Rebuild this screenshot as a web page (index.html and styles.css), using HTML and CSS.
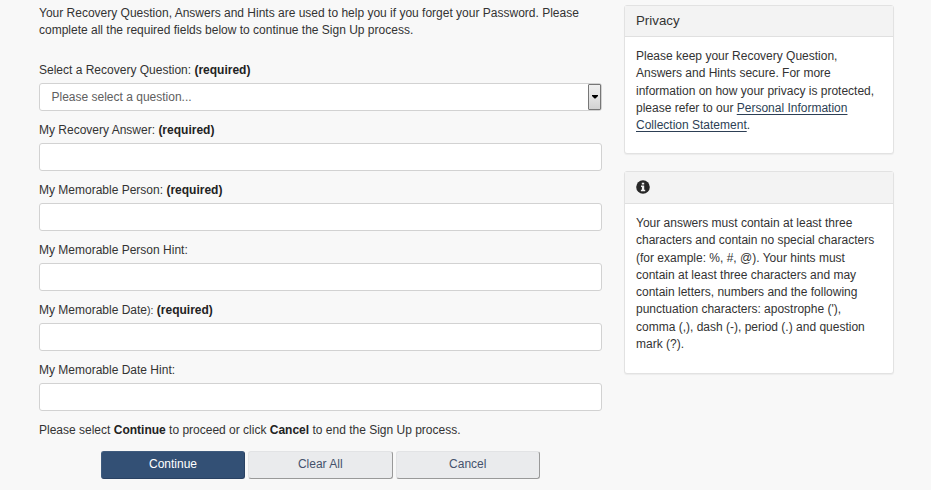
FILE: index.html
```html
<!DOCTYPE html>
<html lang="en">
<head>
<meta charset="utf-8">
<title>Recovery Question</title>
<link rel="stylesheet" href="styles.css">
</head>
<body>
<div class="page">
  <main class="form">
    <p class="intro">Your Recovery Question, Answers and Hints are used to help you if you forget your Password. Please<br>complete all the required fields below to continue the Sign Up process.</p>
    <div class="field"><label>Select a Recovery Question: <b>(required)</b></label>
      <div class="box select"><span>Please select a question...</span><i class="drop"><svg width="6" height="4" viewBox="0 0 6 4"><path d="M0 0h6v1L3.500 3.500h-1L0 1z"/></svg></i></div></div>
    <div class="field"><label>My Recovery Answer: <b>(required)</b></label><div class="box"></div></div>
    <div class="field"><label>My Memorable Person: <b>(required)</b></label><div class="box"></div></div>
    <div class="field"><label>My Memorable Person Hint:</label><div class="box"></div></div>
    <div class="field"><label>My Memorable Date<small>):</small> <b>(required)</b></label><div class="box"></div></div>
    <div class="field"><label>My Memorable Date Hint:</label><div class="box"></div></div>
    <p class="closing">Please select <b>Continue</b> to proceed or click <b>Cancel</b> to end the Sign Up process.</p>
    <div class="actions">
      <button class="primary">Continue</button><button>Clear All</button><button>Cancel</button>
    </div>
  </main>
  <aside class="side">
    <section class="panel privacy">
      <h2>Privacy</h2>
      <p>Please keep your Recovery Question,<br>Answers and Hints secure. For more<br>information on how your privacy is protected,<br>please refer to our <a href="#">Personal Information<br>Collection Statement</a>.</p>
    </section>
    <section class="panel info">
      <h2><svg width="14" height="14" viewBox="0 0 14 14"><circle cx="7" cy="7" r="6.800" fill="#282828"/><path d="M5.800 2.800h2.400v1.700H5.800zM5 5.500h3.200v4.200H9.200v1.500H4.900V9.700h1V7H5z" fill="#f3f3f3"/></svg></h2>
      <p>Your answers must contain at least three<br>characters and contain no special characters<br>(for example: %, #, @). Your hints must<br>contain at least three characters and may<br>contain letters, numbers and the following<br>punctuation characters: apostrophe ('),<br>comma (,), dash (-), period (.) and question<br>mark (?).</p>
    </section>
  </aside>
</div>
</body>
</html>
```
FILE: styles.css
```css
* { box-sizing: border-box; }
body { margin: 0; height: 490px; overflow: hidden; background: #f8f8f8; color: #333; font: 12px/17.280px "Liberation Sans", Arial, sans-serif; }
p, h2 { margin: 0; }
b { color: #222; }
.page { display: flex; gap: 22px; padding: 5px 37px 0 39px; }
.form { width: 563px; }
.intro { height: 56px; white-space: nowrap; }
.field { height: 60px; }
.field label { display: block; height: 22px; line-height: 18px; }
.field small { font-size: 10.500px; }
.box { height: 28px; border: 1px solid #d2d2d2; border-radius: 3px; background: #fff; }
.select { display: flex; justify-content: space-between; padding-left: 11.500px; line-height: 26px; color: #606060; }
.drop { display: flex; align-items: center; justify-content: center; width: 13px; border: 1px solid #777; border-radius: 1px; background: linear-gradient(#f0f0f0, #e4e4e4 50%, #d2d2d2); }
.closing { height: 30px; line-height: 18px; }
.actions { display: flex; gap: 3px; padding-left: 62px; }
button { width: 144.500px; height: 28px; padding: 0; border: 1px solid #e2e3e5; border-right: 1px solid #999; border-bottom: 1px solid #999; border-radius: 3px; background: #eaebed; color: #45526c; font: inherit; }
.primary { width: 144px; background: #335075; border-color: #3f5b7e #294162 #294162 #3f5b7e; color: #fff; }
.side { width: 270px; }
.panel { border: 1px solid #e2e2e2; border-radius: 3px; background: #fff; box-shadow: 0 1px 1px rgba(0,0,0,.05); white-space: nowrap; }
.privacy { height: 149px; margin-bottom: 17px; }
.info { height: 203px; }
.panel h2 { display: flex; align-items: center; height: 31px; padding-left: 11px; border-bottom: 1px solid #e0e0e0; background: #f3f3f3; font-size: 13.300px; font-weight: normal; }
.privacy h2 { padding-bottom: 1px; }
.info h2 { height: 32px; padding-bottom: 1px; }
.panel p { padding: 11px; }
a { color: #2d3f55; text-underline-offset: 2px; }
```
